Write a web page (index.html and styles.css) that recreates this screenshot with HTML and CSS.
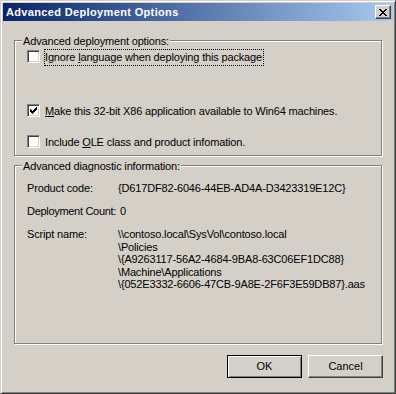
FILE: index.html
```html
<!DOCTYPE html>
<html lang="en">
<head>
    <meta charset="UTF-8">
    <title>Advanced Deployment Options</title>
    <link rel="stylesheet" href="styles.css">
</head>
<body>
    <div class="window">
        <div class="titlebar">
            <span class="title">Advanced Deployment Options</span>
            <button class="close-button" aria-label="Close">
                <svg width="8" height="7" viewBox="0 0 8 7" shape-rendering="crispEdges">
                    <path d="M0 0h2v1h-2z M6 0h2v1h-2z M1 1h2v1h-2z M5 1h2v1h-2z M2 2h4v1h-4z M3 3h2v1h-2z M2 4h4v1h-4z M1 5h2v1h-2z M5 5h2v1h-2z M0 6h2v1h-2z M6 6h2v1h-2z" fill="#000"/>
                </svg>
            </button>
        </div>

        <div class="content">
            <div class="group group-options">
                <div class="group-title">Advanced deployment options:</div>

                <div class="check-row first">
                    <span class="check"></span>
                    <span class="check-label focused">Ignore <u>l</u>anguage when deploying this package</span>
                </div>
                <div class="check-row second">
                    <span class="check">
                        <svg width="7" height="7" viewBox="0 0 7 7" shape-rendering="crispEdges">
                            <path d="M6 0h1v1h-1z M5 1h2v1h-2z M0 2h1v1h-1z M4 2h3v1h-3z M0 3h2v1h-2z M3 3h3v1h-3z M0 4h5v1h-5z M1 5h3v1h-3z M2 6h1v1h-1z" fill="#000"/>
                        </svg>
                    </span>
                    <span class="check-label"><u>M</u>ake this 32-bit X86 application available to Win64 machines.</span>
                </div>
                <div class="check-row third">
                    <span class="check"></span>
                    <span class="check-label">Include <u>O</u>LE class and product infomation.</span>
                </div>
            </div>

            <div class="group group-info">
                <div class="group-title">Advanced diagnostic information:</div>

                <div class="info-grid">
                    <span class="info-label">Product code:</span>
                    <span class="info-value">{D617DF82-6046-44EB-AD4A-D3423319E12C}</span>

                    <span class="info-label tight">Deployment Count:</span>
                    <span class="info-value count">0</span>

                    <span class="info-label">Script name:</span>
                    <span class="info-value script">\\contoso.local\SysVol\contoso.local<br>\Policies<br>\{A9263117-56A2-4684-9BA8-63C06EF1DC88}<br>\Machine\Applications<br>\{052E3332-6606-47CB-9A8E-2F6F3E59DB87}.aas</span>
                </div>
            </div>

            <div class="buttons">
                <button class="button default">OK</button>
                <button class="button">Cancel</button>
            </div>
        </div>
    </div>
</body>
</html>
```

FILE: styles.css
```css
body {
    margin: 0;
    font-family: 'Liberation Sans', Arial, sans-serif;
    font-size: 11px;
    letter-spacing: -0.16px;
    color: #000;
    background-color: #d4d0c8;
}
.window {
    width: 396px;
    height: 394px;
    box-sizing: border-box;
    padding: 2px;
    background-color: #d4d0c8;
    border: 1px solid;
    border-color: #d4d0c8 #404040 #404040 #d4d0c8;
    box-shadow: inset 1px 1px #fff, inset -1px -1px #808080;
}
.titlebar {
    height: 18px;
    display: flex;
    align-items: center;
    justify-content: space-between;
    padding: 0 2px 0 3px;
    background: linear-gradient(to right, #0a246a, #a6caf0);
}
.title {
    color: #fff;
    font-weight: bold;
    font-size: 11px;
    line-height: 18px;
    letter-spacing: 0.35px;
}
.close-button {
    width: 16px;
    height: 14px;
    box-sizing: border-box;
    padding: 0;
    display: flex;
    align-items: center;
    justify-content: center;
    background-color: #d4d0c8;
    border: 1px solid;
    border-color: #fff #404040 #404040 #fff;
    box-shadow: inset -1px -1px #808080;
}
.close-button svg {
    display: block;
}
.content {
    padding: 19px 11px 0 11px;
}
.group {
    display: flex;
    flex-direction: column;
    align-items: flex-start;
    padding: 0 12px;
    border: 1px solid #808080;
    box-shadow: inset 1px 1px #fff, 1px 1px 0 #fff;
}
.group-options {
    height: 116px;
    box-sizing: border-box;
    margin-bottom: 9px;
}
.group-info {
    height: 179px;
    box-sizing: border-box;
}
.group-title {
    margin: -6px 0 0 -5px;
    padding: 0 1px;
    line-height: 13px;
    white-space: nowrap;
    background-color: #d4d0c8;
}
.check-row {
    display: flex;
    align-items: flex-start;
}
.check-row.first {
    margin-top: 1px;
}
.check-row.second {
    margin-top: 37px;
}
.check-row.third {
    margin-top: 14px;
}
.check {
    width: 13px;
    height: 13px;
    flex: none;
    box-sizing: border-box;
    margin-top: 1px;
    background-color: #fff;
    border: 1px solid;
    border-color: #808080 #fff #fff #808080;
    box-shadow: inset 1px 1px #404040, inset -1px -1px #d4d0c8;
}
.check svg {
    display: block;
    margin: 2px 0 0 2px;
}
.check-label {
    margin-left: 4px;
    padding: 1px 1px 1px 0;
    line-height: 13px;
    white-space: nowrap;
    border: 1px dotted transparent;
}
.check-label.focused {
    border-color: #000;
}
.info-grid {
    display: grid;
    grid-template-columns: 91px auto;
    row-gap: 10px;
    margin-top: 9px;
    line-height: 13px;
    white-space: nowrap;
}
.info-label.tight {
    letter-spacing: -0.3px;
}
.info-value.count {
    padding-left: 2px;
}
.info-value.script {
    line-height: 12.5px;
}
.buttons {
    display: flex;
    justify-content: flex-end;
    gap: 6px;
    margin: 11px -1px 0 0;
}
.button {
    width: 75px;
    height: 23px;
    box-sizing: border-box;
    padding: 0 0 1px 0;
    font-family: 'Liberation Sans', Arial, sans-serif;
    font-size: 11px;
    line-height: 20px;
    color: #000;
    background-color: #d4d0c8;
    border: 1px solid;
    border-color: #fff #404040 #404040 #fff;
    box-shadow: inset -1px -1px #808080;
}
.button.default {
    border-color: #000;
    box-shadow: inset 1px 1px #fff, inset -1px -1px #808080;
}
```
